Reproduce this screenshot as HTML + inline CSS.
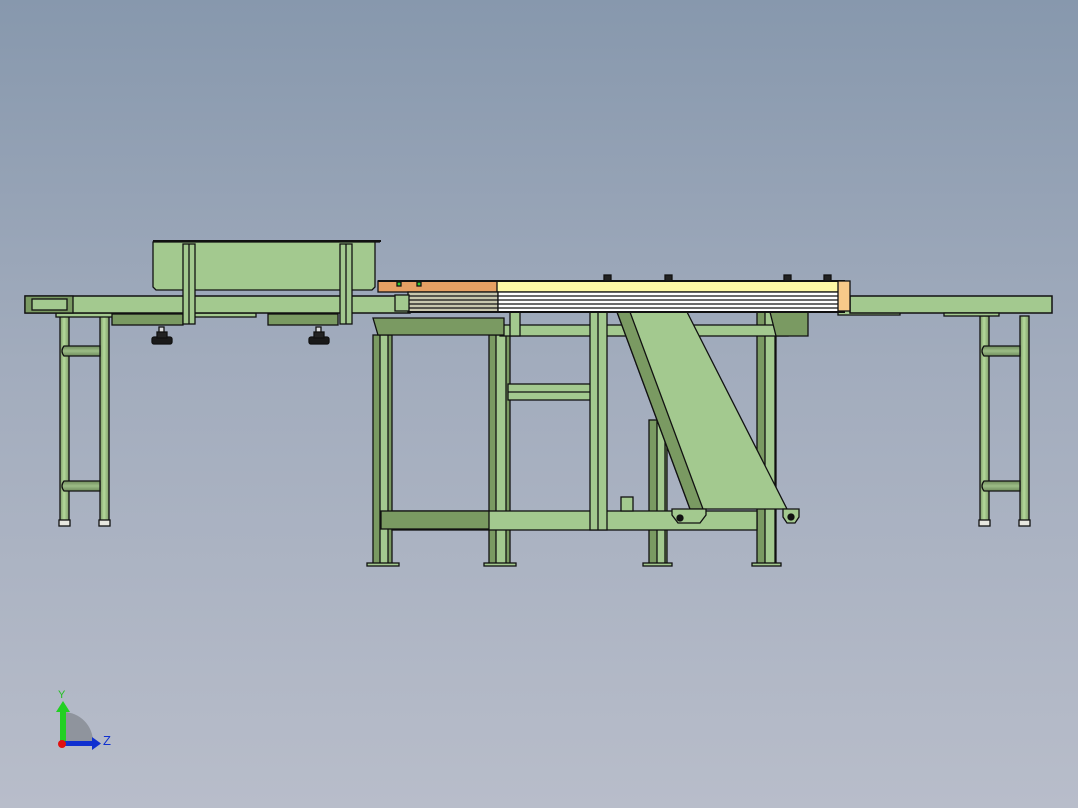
<!DOCTYPE html>
<html><head><meta charset="utf-8"><style>
html,body{margin:0;padding:0;}
body{width:1078px;height:808px;overflow:hidden;background:linear-gradient(#8798ad 0%,#a2acbd 45%,#b8bdca 100%);}
svg{position:absolute;left:0;top:0}
</style></head><body>
<svg width="1078" height="808" viewBox="0 0 1078 808" xmlns="http://www.w3.org/2000/svg">
<defs>
<linearGradient id="tube" x1="0" x2="1" y1="0" y2="0"><stop offset="0" stop-color="#7f9c6a"/><stop offset="0.45" stop-color="#b4d99a"/><stop offset="1" stop-color="#7f9c6a"/></linearGradient>
<linearGradient id="bar" x1="0" x2="0" y1="0" y2="1"><stop offset="0" stop-color="#6f8c5c"/><stop offset="0.5" stop-color="#9cbd86"/><stop offset="1" stop-color="#6f8c5c"/></linearGradient>
</defs>
<g stroke="#111" stroke-width="1.3">
<g>
<rect x="60" y="316" width="9" height="205" fill="url(#tube)"/>
<rect x="100" y="316" width="9" height="205" fill="url(#tube)"/>
<path d="M64 346 h36 v10 h-36 q-4 -5 0 -10z" fill="url(#bar)"/>
<path d="M64 481 h36 v10 h-36 q-4 -5 0 -10z" fill="url(#bar)"/>
<rect x="59" y="520" width="11" height="6" fill="#e8e8e0"/>
<rect x="99" y="520" width="11" height="6" fill="#e8e8e0"/>
</g>
<g>
<rect x="980" y="316" width="9" height="205" fill="url(#tube)"/>
<rect x="1020" y="316" width="9" height="205" fill="url(#tube)"/>
<path d="M984 346 h36 v10 h-36 q-4 -5 0 -10z" fill="url(#bar)"/>
<path d="M984 481 h36 v10 h-36 q-4 -5 0 -10z" fill="url(#bar)"/>
<rect x="979" y="520" width="11" height="6" fill="#e8e8e0"/>
<rect x="1019" y="520" width="11" height="6" fill="#e8e8e0"/>
</g>
<rect x="56" y="313" width="200" height="4" fill="#a3c98f"/>
<rect x="25" y="296" width="385" height="17" fill="#a3c98f" stroke-width="1.5"/>
<rect x="25" y="296" width="48" height="17" fill="#7a9a62"/>
<rect x="32" y="299" width="35" height="11" fill="#a3c98f"/>
<rect x="112" y="314" width="71" height="11" fill="#7a9a62"/>
<rect x="268" y="314" width="70" height="11" fill="#7a9a62"/>
<rect x="159" y="327" width="5" height="6" fill="#ddd"/>
<rect x="152" y="337" width="20" height="7" rx="2" fill="#1a1a1a"/>
<rect x="157" y="332" width="10" height="6" fill="#222"/>
<rect x="316" y="327" width="5" height="6" fill="#ddd"/>
<rect x="309" y="337" width="20" height="7" rx="2" fill="#1a1a1a"/>
<rect x="314" y="332" width="10" height="6" fill="#222"/>
<path d="M153 242 h227 v0 h-5 v45 l-3 3 h-216 l-3 -3z" fill="#a3c98f"/>
<line x1="153" y1="241" x2="381" y2="241" stroke-width="2"/>
<rect x="183" y="244" width="12" height="80" fill="#a3c98f"/>
<line x1="189" y1="244" x2="189" y2="324"/>
<rect x="340" y="244" width="12" height="80" fill="#a3c98f"/>
<line x1="346" y1="244" x2="346" y2="324"/>
<rect x="838" y="310" width="62" height="5" fill="#a3c98f"/>
<rect x="850" y="296" width="202" height="17" fill="#a3c98f" stroke-width="1.5"/>
<rect x="944" y="313" width="55" height="3" fill="#a3c98f"/>
<rect x="373" y="335" width="19" height="230" fill="#7a9a62"/>
<rect x="380" y="335" width="8" height="230" fill="#a3c98f"/>
<rect x="489" y="335" width="21" height="230" fill="#7a9a62"/>
<rect x="496" y="335" width="10" height="230" fill="#a3c98f"/>
<rect x="649" y="420" width="18" height="145" fill="#7a9a62"/>
<rect x="657" y="420" width="8" height="145" fill="#a3c98f"/>
<rect x="757" y="312" width="19" height="253" fill="#7a9a62"/>
<rect x="765" y="312" width="10" height="253" fill="#a3c98f"/>
<rect x="500" y="325" width="288" height="11" fill="#a3c98f"/>
<rect x="508" y="384" width="89" height="16" fill="#a3c98f"/>
<line x1="508" y1="392" x2="597" y2="392"/>
<rect x="392" y="511" width="365" height="19" fill="#a3c98f"/>
<rect x="381" y="511" width="108" height="18" fill="#7a9a62"/>
<rect x="590" y="312" width="17" height="218" fill="#a3c98f"/>
<line x1="598" y1="312" x2="598" y2="530"/>
<rect x="621" y="497" width="12" height="14" fill="#a3c98f"/>
<path d="M373 318 h131 v17 h-126z" fill="#7a9a62"/>
<path d="M770 312 h38 v24 h-32z" fill="#7a9a62"/>
<rect x="510" y="312" width="10" height="24" fill="#a3c98f"/>
<rect x="367" y="563" width="32" height="3" fill="#a3c98f"/>
<rect x="484" y="563" width="32" height="3" fill="#a3c98f"/>
<rect x="643" y="563" width="29" height="3" fill="#a3c98f"/>
<rect x="752" y="563" width="29" height="3" fill="#a3c98f"/>
<path d="M617 312 L687 312 L787 509 L690 509 Z" fill="#a3c98f"/>
<path d="M617 312 L630 312 L703 509 L690 509 Z" fill="#7a9a62"/>
<path d="M672 509 h34 v6 l-6 8 h-22 l-6 -8z" fill="#a3c98f"/>
<path d="M783 509 h16 v8 l-4 6 h-8 l-4 -6z" fill="#a3c98f"/>
<circle cx="680" cy="518" r="3" fill="#111"/>
<circle cx="791" cy="517" r="3" fill="#111"/>
<rect x="378" y="281" width="120" height="11" fill="#e6a063"/>
<rect x="497" y="281" width="344" height="11" fill="#fdf8a6"/>
<rect x="408" y="292" width="90" height="20" fill="#c8c7ae"/>
<rect x="498" y="292" width="343" height="20" fill="#fff"/>
<g stroke-width="1.3"><line x1="408" y1="296" x2="843" y2="296"/><line x1="408" y1="300" x2="843" y2="300"/><line x1="408" y1="304" x2="843" y2="304"/><line x1="408" y1="308" x2="843" y2="308"/><line x1="378" y1="281" x2="845" y2="281" stroke-width="2"/><line x1="408" y1="312" x2="845" y2="312" stroke-width="2"/></g>
<rect x="838" y="281" width="12" height="30" fill="#f7c98a"/>
<rect x="395" y="295" width="14" height="16" fill="#a3c98f"/>
<rect x="604" y="275" width="7" height="6" fill="#222"/>
<rect x="665" y="275" width="7" height="6" fill="#222"/>
<rect x="784" y="275" width="7" height="6" fill="#222"/>
<rect x="824" y="275" width="7" height="6" fill="#222"/>
<rect x="397" y="282" width="4" height="4" fill="#3c3"/>
<rect x="417" y="282" width="4" height="4" fill="#3c3"/>
</g>
<path d="M63 742 V712 A30 30 0 0 1 93 742 Z" fill="#8f949d"/>
<rect x="60" y="708" width="6" height="34" fill="#22d022"/>
<path d="M56 712 L63 701 L70 712Z" fill="#22d022"/>
<rect x="63" y="741" width="30" height="5" fill="#1030d0"/>
<path d="M92 737 L101 743.5 L92 750Z" fill="#1030d0"/>
<circle cx="62" cy="744" r="4" fill="#e01010"/>
<text x="58" y="698" font-family="Liberation Sans, sans-serif" font-size="11" fill="#22c022">Y</text>
<text x="103" y="745" font-family="Liberation Sans, sans-serif" font-size="13" fill="#1030d0">Z</text>
</svg>
</body></html>
